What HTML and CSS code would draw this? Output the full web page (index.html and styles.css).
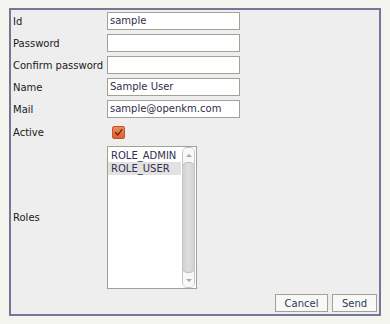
FILE: index.html
```html
<!DOCTYPE html>
<html lang="en">
<head>
    <meta charset="UTF-8">
    <title>User</title>
    <link rel="stylesheet" href="styles.css">
</head>
<body>
    <div class="user-box">
        <div class="user-form">
            <label class="field-label">Id</label>
            <div class="text-box">sample</div>

            <label class="field-label">Password</label>
            <div class="text-box"></div>

            <label class="field-label">Confirm password</label>
            <div class="text-box"></div>

            <label class="field-label">Name</label>
            <div class="text-box">Sample User</div>

            <label class="field-label">Mail</label>
            <div class="text-box">sample@openkm.com</div>

            <label class="field-label">Active</label>
            <div class="check-cell">
                <span class="check-box">
                    <svg viewBox="0 0 13 13">
                        <path d="M3 6.5l2.5 3L10.5 3" fill="none" stroke="#5b2a14" stroke-width="1.6" stroke-linecap="round" stroke-linejoin="round"/>
                    </svg>
                </span>
            </div>

            <label class="field-label">Roles</label>
            <div class="list-box">
                <div class="list-items">
                    <div class="list-item">ROLE_ADMIN</div>
                    <div class="list-item selected">ROLE_USER</div>
                </div>
                <div class="scroll-bar">
                    <div class="scroll-btn"><span class="arrow-up"></span></div>
                    <div class="scroll-thumb"></div>
                    <div class="scroll-btn"><span class="arrow-down"></span></div>
                </div>
            </div>
        </div>

        <div class="button-row">
            <button class="btn">Cancel</button>
            <button class="btn">Send</button>
        </div>
    </div>
</body>
</html>
```

FILE: styles.css
```css
:root {
    --clr-page: #f4f4ee;
    --clr-panel: #eeeeee;
    --clr-frame: #76769a;
    --clr-field-border: #a2a294;
    --clr-text: #202020;
    --clr-field-text: #30304a;
}

* {
    margin: 0;
    padding: 0;
    box-sizing: border-box;
}

body {
    font-family: "DejaVu Sans", sans-serif;
    font-size: 10px;
    color: var(--clr-text);
    background: var(--clr-page);
    padding: 8px 9px;
}

.user-box {
    width: 372px;
    height: 308px;
    background: var(--clr-panel);
    border: 2px solid var(--clr-frame);
    padding: 2px 2px 0 2px;
}

.user-form {
    display: grid;
    grid-template-columns: 94px 133px;
    grid-template-rows: 18px 18px 18px 18px 18px 20px 143px;
    row-gap: 4px;
}

.field-label {
    display: flex;
    align-items: center;
    white-space: nowrap;
}

.text-box {
    height: 18px;
    background: #fff;
    border: 1px solid var(--clr-field-border);
    color: var(--clr-field-text);
    padding: 0 2px;
    line-height: 16px;
    white-space: nowrap;
    overflow: hidden;
}

.check-cell {
    display: flex;
    align-items: center;
    padding-left: 5px;
}

.check-box {
    width: 13px;
    height: 13px;
    border-radius: 2px;
    background: linear-gradient(#f08a5a, #e0622e);
    border: 1px solid #c4522a;
    display: flex;
}

.check-box svg {
    width: 11px;
    height: 11px;
}

.list-box {
    width: 90px;
    background: #fff;
    border: 1px solid var(--clr-field-border);
    display: flex;
    color: var(--clr-field-text);
}

.list-items {
    flex: 1;
    padding-top: 2px;
}

.list-item {
    height: 13px;
    line-height: 13px;
    padding-left: 3px;
}

.list-item.selected {
    background: #e2e2e2;
}

.scroll-bar {
    width: 13px;
    margin: 0 1px 0 1px;
    border: 1px solid #c6c6c6;
    border-radius: 5px;
    background: #f4f4f4;
    display: flex;
    flex-direction: column;
    overflow: hidden;
}

.scroll-btn {
    height: 14px;
    display: flex;
    align-items: center;
    justify-content: center;
    background: #f8f8f8;
}

.arrow-up,
.arrow-down {
    width: 0;
    height: 0;
    border-left: 3px solid transparent;
    border-right: 3px solid transparent;
}

.arrow-up {
    border-bottom: 3px solid #a8a8a8;
}

.arrow-down {
    border-top: 3px solid #a8a8a8;
}

.scroll-thumb {
    flex: 1;
    background: linear-gradient(90deg, #d2d2d2, #dedede, #d2d2d2);
    border: 1px solid #c0c0c0;
    border-radius: 5px;
    margin: 0 -1px;
}

.button-row {
    display: flex;
    justify-content: flex-end;
    gap: 4px;
    margin-top: 5px;
    padding-right: 0;
}

.btn {
    height: 18px;
    padding: 0 8px;
    font-family: inherit;
    font-size: 10px;
    color: #2c3c58;
    background: #f8f8f6;
    border: 1px solid var(--clr-field-border);
}

.btn:first-child {
    width: 53px;
}

.btn:last-child {
    width: 45px;
}
```
